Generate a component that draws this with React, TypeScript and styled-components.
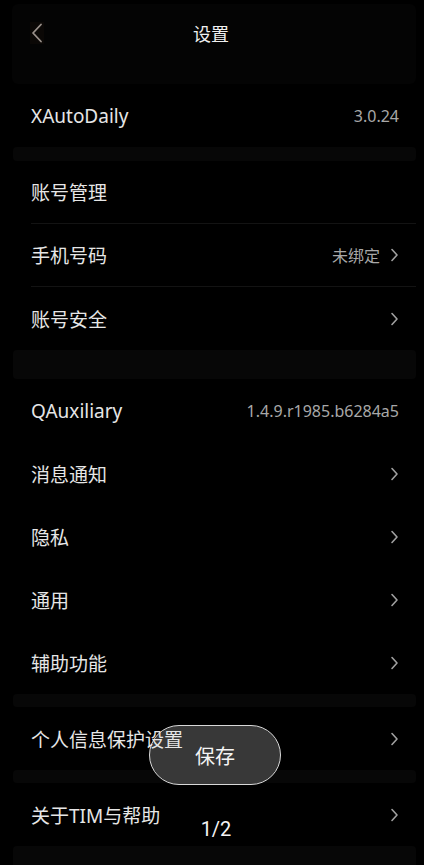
import React from 'react'
import styled, { createGlobalStyle } from 'styled-components'

const GlobalStyle = createGlobalStyle`
  html, body {
    margin: 0;
    padding: 0;
    background: #000;
  }
  body {
    font-family: 'Noto Sans', 'Noto Sans CJK SC', sans-serif;
    color: #e8e8e8;
  }
`

const Page = styled.div`
  position: relative;
  width: 424px;
  height: 865px;
  overflow: hidden;
  background: #000;
`

const Header = styled.div`
  height: 80px;
  margin: 4px 8px 0 12px;
  background: #040404;
  border-radius: 6px;
  display: grid;
  grid-template-columns: 40px 1fr 40px;
  align-items: start;
  padding-top: 12px;
  box-sizing: border-box;
`

const BackButton = styled.div`
  width: 14px;
  height: 22px;
  margin-left: 18px;
  margin-top: 6px;
  background: #0b0806;
  display: flex;
  align-items: center;
  justify-content: center;
`

const Title = styled.div`
  text-align: center;
  font-size: 18px;
  line-height: 36px;
  color: #f0f0f0;
  margin-left: -6px;
`

const Gap = styled.div<{ h: number }>`
  height: ${p => p.h}px;
  margin: 0 8px 0 13px;
  background: #070707;
  border-radius: 4px;
`

const Group = styled.div`
  display: flex;
  flex-direction: column;
`

const Row = styled.div<{ divider?: boolean }>`
  position: relative;
  z-index: 2;
  height: 63px;
  display: flex;
  align-items: center;
  padding-right: 17px;
  margin-right: 8px;
  box-sizing: border-box;
  border-bottom: ${p => (p.divider ? '1px solid #131313' : 'none')};
  margin-left: ${p => (p.divider ? '31px' : '0')};
  padding-left: ${p => (p.divider ? '0' : '31px')};
`

const Label = styled.span`
  flex: 1;
  font-size: 19px;
  color: #e6e6e6;
`

const Value = styled.span`
  font-size: 16px;
  color: #a8a8a8;
`

const Chevron = styled.svg`
  margin-left: 10px;
  flex-shrink: 0;
`

const Toast = styled.div`
  position: absolute;
  z-index: 1;
  left: 149px;
  top: 725px;
  width: 132px;
  height: 60px;
  box-sizing: border-box;
  border: 1px solid #d8d8d8;
  border-radius: 30px;
  background: #383838;
  display: flex;
  align-items: center;
  justify-content: center;
  font-size: 20px;
  color: #f4f4f4;
`

const Pager = styled.div`
  position: absolute;
  z-index: 3;
  left: 0;
  right: 0;
  top: 815px;
  text-align: center;
  font-family: Roboto, 'Noto Sans', sans-serif;
  font-size: 20px;
  line-height: 28px;
  color: #f4f4f4;
  padding-left: 8px;
`

const Arrow = () => (
  <Chevron width="9" height="14" viewBox="0 0 9 14">
    <polyline points="2,1.5 7,7 2,12.5" fill="none" stroke="#a0a0a0" strokeWidth="1.6" strokeLinecap="round" strokeLinejoin="round" />
  </Chevron>
)

type ItemProps = { label: string; value?: string; arrow?: boolean; divider?: boolean }

const Item = ({ label, value, arrow, divider }: ItemProps) => (
  <Row divider={divider}>
    <Label>{label}</Label>
    {value ? <Value>{value}</Value> : null}
    {arrow ? <Arrow /> : null}
  </Row>
)

export default function App() {
  return (
    <Page>
      <GlobalStyle />
      <Header>
        <BackButton>
          <svg width="12" height="20" viewBox="0 0 12 20">
            <polyline points="10,1.5 2,10 10,18.5" fill="none" stroke="#9a918b" strokeWidth="1.8" strokeLinecap="round" strokeLinejoin="round" />
          </svg>
        </BackButton>
        <Title>设置</Title>
        <div />
      </Header>
      <Group>
        <Item label="XAutoDaily" value="3.0.24" />
      </Group>
      <Gap h={14} />
      <Group>
        <Item label="账号管理" divider />
        <Item label="手机号码" value="未绑定" arrow divider />
        <Item label="账号安全" arrow />
      </Group>
      <Gap h={29} />
      <Group>
        <Item label="QAuxiliary" value="1.4.9.r1985.b6284a5" />
        <Item label="消息通知" arrow />
        <Item label="隐私" arrow />
        <Item label="通用" arrow />
        <Item label="辅助功能" arrow />
      </Group>
      <Gap h={13} />
      <Group>
        <Item label="个人信息保护设置" arrow />
      </Group>
      <Gap h={13} />
      <Group>
        <Item label="关于TIM与帮助" arrow />
      </Group>
      <Gap h={30} />
      <Toast>保存</Toast>
      <Pager>1/2</Pager>
    </Page>
  )
}
